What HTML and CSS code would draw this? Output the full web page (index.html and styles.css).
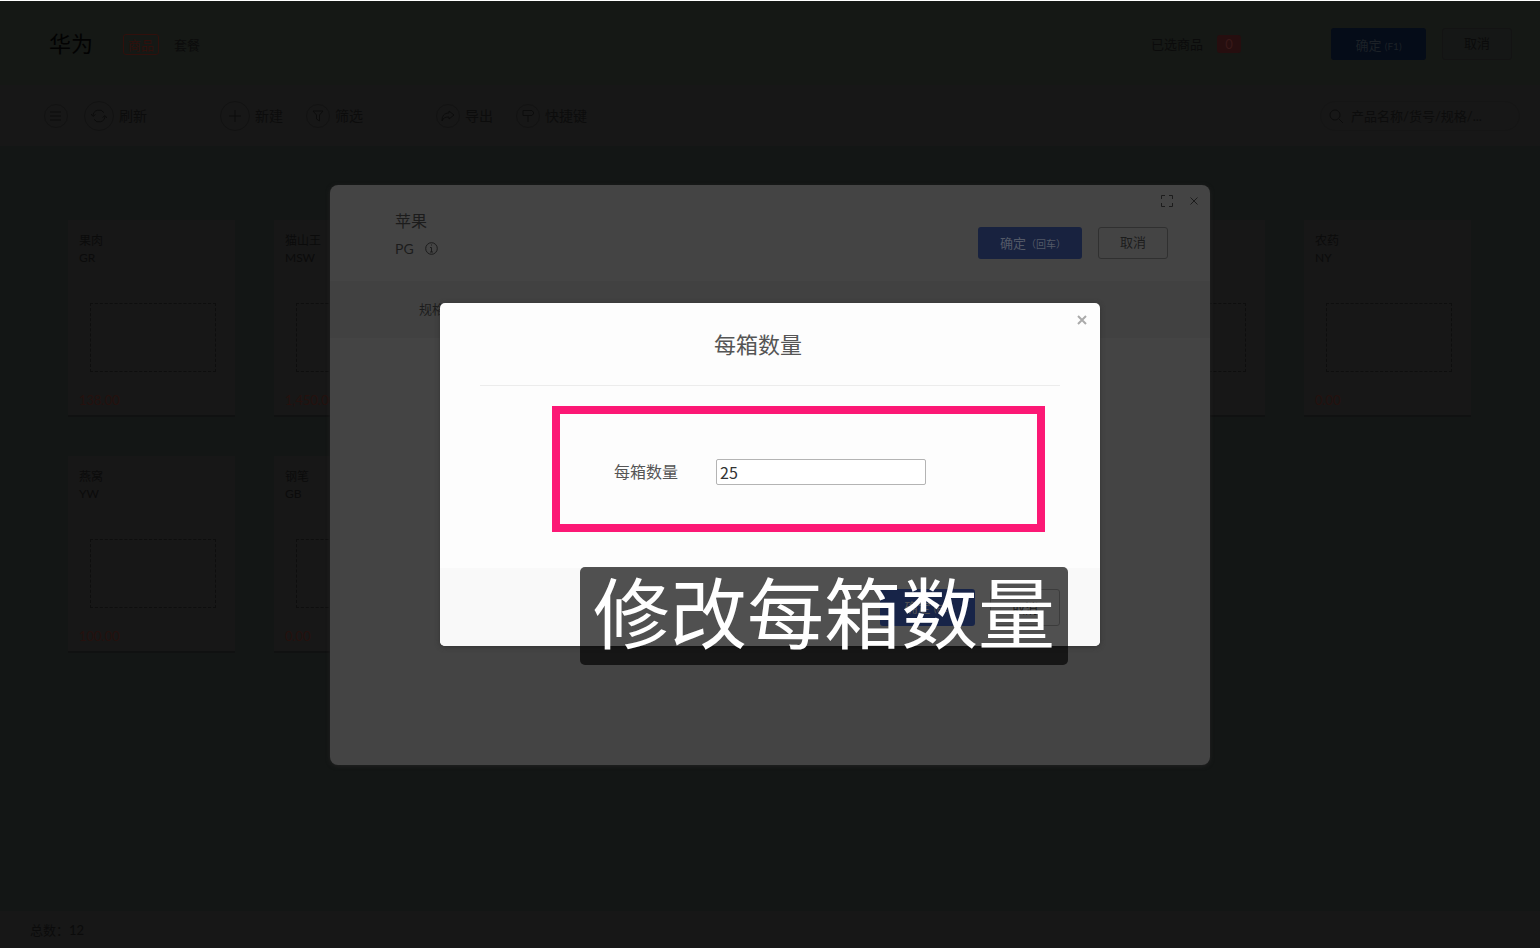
FILE: index.html
```html
<!DOCTYPE html>
<html lang="zh-CN">
<head>
<meta charset="utf-8">
<title>每箱数量</title>
<link rel="stylesheet" href="styles.css">
</head>
<body>
<div class="page">
  <header class="topbar">
    <h1 class="brand">华为</h1>
    <nav class="tabs">
      <a class="tab tab-active" href="#goods">商品</a>
      <a class="tab" href="#combo">套餐</a>
    </nav>
    <div class="picked">已选商品 <span class="badge">0</span></div>
    <button class="btn btn-page-primary" type="button">确定 <small>(F1)</small></button>
    <button class="btn btn-page" type="button">取消</button>
  </header>

  <div class="toolbar">
    <button class="tool" type="button" aria-label="菜单">
      <span class="ring"><svg width="12" height="10" viewBox="0 0 12 10"><path d="M0 1h11M0 5h11M0 9h11"/></svg></span>
    </button>
    <button class="tool" type="button">
      <span class="ring ring-large"><svg width="16" height="14" viewBox="0 0 16 14"><path d="M2 7a6 6 0 0 1 11-3.300M14 7a6 6 0 0 1-11 3.300M0 5l2 2.500L4.500 5.500M16 9l-2-2.500L11.500 8.500"/></svg></span>刷新
    </button>
    <button class="tool tool-group" type="button">
      <span class="ring ring-large"><svg width="12" height="12" viewBox="0 0 12 12"><path d="M6 0v12M0 6h12"/></svg></span>新建
    </button>
    <button class="tool tool-next" type="button">
      <span class="ring"><svg width="12" height="12" viewBox="0 0 12 12"><path d="M1 1h10L7.500 5v6l-3-2V5z"/></svg></span>筛选
    </button>
    <button class="tool tool-group" type="button">
      <span class="ring"><svg width="14" height="12" viewBox="0 0 14 12"><path d="M8 1l5 4-5 4V7C4 7 2 8 1 11 1 6 3 3 8 3z"/></svg></span>导出
    </button>
    <button class="tool tool-next" type="button">
      <span class="ring"><svg width="12" height="14" viewBox="0 0 12 14"><path d="M1 1.500h9l2 2.500-2 2.500H1zM6 6.500V13"/></svg></span>快捷键
    </button>
    <label class="search">
      <svg width="14" height="14" viewBox="0 0 14 14"><circle cx="6" cy="6" r="5"/><path d="M10 10l4 4"/></svg>
      <input type="text" placeholder="产品名称/货号/规格/..." aria-label="搜索">
    </label>
  </div>

  <main class="grid">
    <article class="card"><h2>果肉</h2><p>GR</p><div class="photo"></div><span class="price">138.00</span></article>
    <article class="card"><h2>猫山王</h2><p>MSW</p><div class="photo"></div><span class="price">1,450.00</span></article>
    <article class="card"><div class="photo"></div></article>
    <article class="card"><div class="photo"></div></article>
    <article class="card"><div class="photo"></div></article>
    <article class="card"><div class="photo"></div></article>
    <article class="card"><h2>农药</h2><p>NY</p><div class="photo"></div><span class="price">0.00</span></article>
    <article class="card"><h2>燕窝</h2><p>YW</p><div class="photo"></div><span class="price">100.00</span></article>
    <article class="card"><h2>钢笔</h2><p>GB</p><div class="photo"></div><span class="price">0.00</span></article>
    <article class="card"><div class="photo"></div></article>
    <article class="card"><div class="photo"></div></article>
    <article class="card"><div class="photo"></div></article>
  </main>

  <footer class="status">总数：12</footer>

  <div class="layer">
    <section class="sheet">
      <div class="sheet-head">
        <div class="window-tools">
          <button type="button" aria-label="全屏"><svg width="12" height="12" viewBox="0 0 12 12"><path d="M.5 4V.5H4M8 .5h3.500V4M11.500 8v3.500H8M4 11.500H.5V8"/></svg></button>
          <button type="button" aria-label="关闭"><svg width="8" height="8" viewBox="0 0 8 8"><path d="M.5.5l7 7M7.500.5l-7 7"/></svg></button>
        </div>
        <div class="sheet-title">
          <h2>苹果</h2>
          <p>PG <svg width="13" height="13" viewBox="0 0 13 13"><circle cx="6.500" cy="6.500" r="5.800"/><path d="M5 5.500h1.500V10M5 10h3M6 3h1"/></svg></p>
        </div>
        <button class="btn btn-sheet-primary" type="button">确定<small>（回车）</small></button>
        <button class="btn btn-sheet" type="button">取消</button>
      </div>
      <div class="columns"><span>规格</span><span>每箱数量</span><span>价格</span></div>
    </section>
  </div>

  <div class="layer">
    <form class="dialog">
      <button class="dialog-close" type="button" aria-label="关闭"><svg width="10" height="10" viewBox="0 0 10 10"><path d="M1 1l8 8M9 1l-8 8"/></svg></button>
      <h2 class="dialog-title">每箱数量</h2>
      <div class="dialog-body">
        <label for="qty">每箱数量</label>
        <input id="qty" type="text" value="25">
      </div>
      <div class="dialog-foot">
        <button class="btn btn-dialog-primary" type="button">确定 <small>(F1)</small></button>
        <button class="btn btn-dialog" type="button">取消</button>
      </div>
      <div class="highlight"></div>
      <div class="caption">修改每箱数量</div>
    </form>
  </div>
</div>
</body>
</html>
```
FILE: styles.css
```css
* { box-sizing: border-box; }
body {
  margin: 0;
  background: #131615;
  color: #0b0b0b;
  font: 13px/16px Lato, "Noto Sans CJK SC", sans-serif;
}
h1, h2, p { margin: 0; font-weight: 400; }
button, input { font: inherit; color: inherit; }
button { padding: 0; border: 0; background: none; }
a { color: inherit; text-decoration: none; }
svg { fill: none; stroke: currentColor; flex: none; }

.page {
  position: relative;
  min-height: 100vh;
  display: flex;
  flex-direction: column;
  border-top: 1px solid #fff;
}

.topbar {
  display: flex;
  align-items: center;
  height: 84px;
  padding: 2px 28px 0 49px;
  background: #151815;
}
.brand { font-size: 22px; line-height: 32px; color: #020202; }
.tabs { display: flex; gap: 10px; margin-left: 30px; }
.tab { padding: 1px 4px 0; border: 1px solid transparent; border-radius: 3px; line-height: 18px; }
.tab-active { border-color: #30100c; color: #30100c; }
.picked { display: flex; align-items: center; gap: 14px; margin-left: auto; margin-right: 90px; }
.badge { width: 24px; border-radius: 3px; background: #260e0f; color: #391919; text-align: center; line-height: 18px; }

.btn { height: 32px; border-radius: 3px; font-size: 13px; }
.btn small { font-size: 10px; }
.btn-page-primary { width: 95px; padding-top: 2px; background: #050c18; color: #1c2127; }
.btn-page { width: 70px; margin-left: 16px; padding-bottom: 2px; border: 1px solid #131313; background: #151716; }

.toolbar {
  display: flex;
  align-items: center;
  height: 61px;
  padding: 0 20px 0 44px;
  background: #171717;
  color: #0c0c0c;
}
.tool { display: flex; align-items: center; gap: 5px; font-size: 14px; }
.tool + .tool { margin-left: 16px; }
.tool + .tool-next { margin-left: 23px; }
.tool + .tool-group { margin-left: 73px; }
.ring { display: grid; place-items: center; width: 24px; height: 24px; border: 1px solid #121212; border-radius: 50%; }
.ring-large { width: 30px; height: 30px; }
.search {
  display: flex;
  align-items: center;
  gap: 8px;
  width: 200px;
  height: 30px;
  margin-left: auto;
  padding: 0 8px;
  border: 1px solid #151515;
  border-radius: 15px;
}
.search input { flex: 1; min-width: 0; padding: 0; border: 0; background: none; outline: 0; }
.search input::placeholder { color: #0c0c0c; }

.grid {
  flex: 1;
  display: grid;
  grid-template-columns: repeat(7, 1fr);
  align-content: start;
  gap: 39px;
  padding: 74px 69px 39px 68px;
}
.card {
  display: flex;
  flex-direction: column;
  height: 197px;
  padding: 12px 11px 7px;
  background: #171717;
  border-bottom: 2px solid #101111;
}
.card h2, .card p { font-size: 12px; line-height: 17px; }
.photo { height: 69px; margin: auto 8px 20px 11px; border: 1px dashed #0e0e0e; }
.card:not(:has(.price)) .photo { margin-bottom: 36px; }
.price { font-size: 13px; line-height: 16px; color: #25110e; }

.status { height: 37px; padding: 11px 30px; background: #171717; }

.layer { position: absolute; inset: 0; display: grid; place-items: center; }

.sheet {
  width: 880px;
  max-width: 100%;
  min-height: 580px;
  border-radius: 8px;
  background: #444;
  box-shadow: 0 1px 4px #222;
  color: #1c1c1c;
}
.sheet-head {
  position: relative;
  display: flex;
  align-items: center;
  height: 96px;
  padding: 20px 42px 0 65px;
}
.window-tools { position: absolute; top: 10px; right: 12px; display: flex; align-items: center; gap: 17px; }
.window-tools button { display: flex; }
.sheet-title { margin-right: auto; padding-bottom: 16px; }
.sheet-title h2 { font-size: 16px; line-height: 28px; }
.sheet-title p { display: flex; align-items: center; gap: 11px; font-size: 14px; line-height: 28px; }
.btn-sheet-primary { width: 104px; padding: 2px 0 0 6px; background: #18223f; color: #535967; }
.btn-sheet { width: 70px; margin-left: 16px; padding-bottom: 2px; border: 1px solid #303030; }
.columns { display: grid; grid-template-columns: 243px 83px 1fr; padding: 20px 89px 21px; background: #414141; }

.dialog {
  position: relative;
  width: 660px;
  max-width: 100%;
  border-radius: 5px;
  background: #fdfdfd;
  box-shadow: 0 1px 5px #333;
  color: #555;
}
.dialog-close { position: absolute; top: 12px; right: 13px; display: flex; color: #aaa; }
.dialog-close svg { stroke-width: 2; }
.dialog-title {
  margin: 0 40px;
  padding: 26px 24px 24px 0;
  border-bottom: 1px solid #ececec;
  font-size: 22px;
  line-height: 32px;
  text-align: center;
}
.dialog-body { display: flex; align-items: center; height: 182px; padding: 0 174px 10px; font-size: 16px; }
.dialog-body input {
  width: 210px;
  height: 26px;
  margin-left: auto;
  padding: 0 3px;
  border: 1px solid #b4b4b4;
  border-radius: 2px;
  background: #fff;
  color: #333;
  font-family: "Noto Sans CJK SC", sans-serif;
  font-size: 16px;
}
.dialog-body label { margin-right: 38px; }
.dialog-foot {
  display: flex;
  justify-content: flex-end;
  gap: 15px;
  padding: 21px 40px 20px;
  border-radius: 0 0 5px 5px;
  background: #f9f9f9;
}
.dialog-foot .btn { height: 37px; }
.btn-dialog-primary { width: 95px; background: #4a70e1; color: #fff; }
.btn-dialog { width: 70px; border: 1px solid #bbb; }

.highlight { position: absolute; top: 103px; left: 112px; right: 55px; height: 126px; border: 8px solid #fc1875; pointer-events: none; }
.caption {
  position: absolute;
  top: 264px;
  left: 140px;
  padding: 0 13px 6px;
  border-radius: 5px;
  background: rgba(0, 0, 0, .68);
  color: #fff;
  font-size: 77px;
  line-height: 92px;
  white-space: nowrap;
}
```
